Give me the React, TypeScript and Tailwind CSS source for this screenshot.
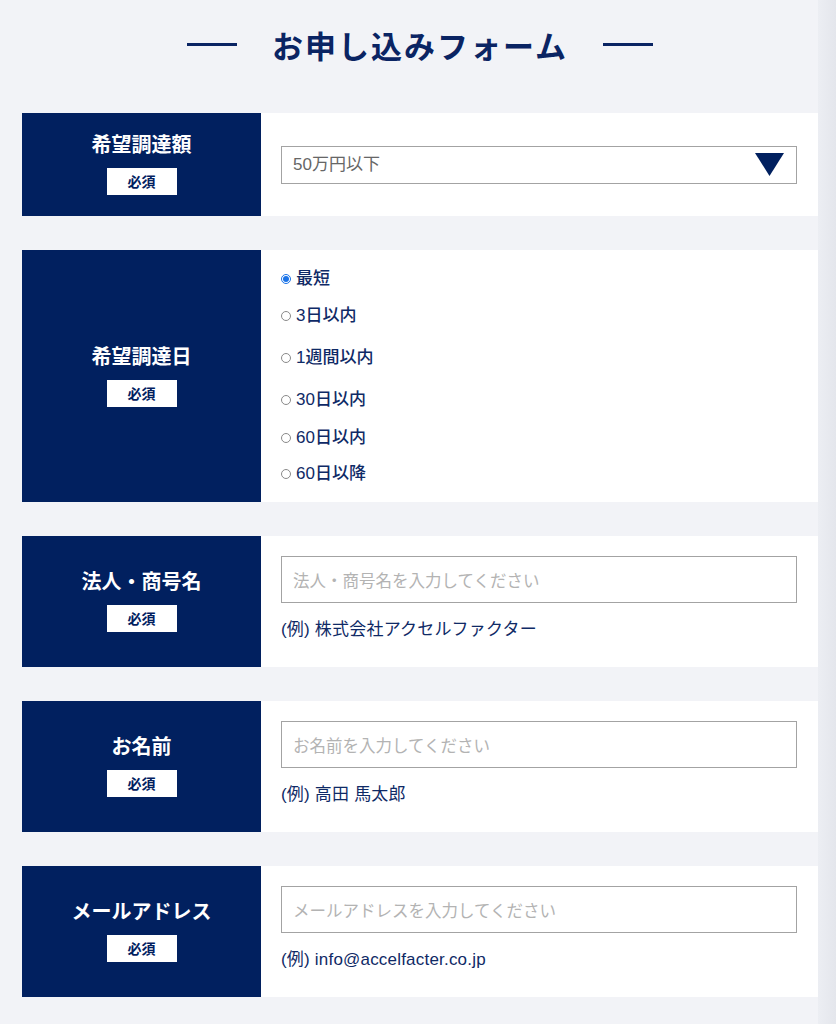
import React, { useState } from 'react';

const font = { fontFamily: '"Noto Sans CJK JP", "Noto Sans", sans-serif' };
const mixed = { fontFamily: '"Liberation Sans", "Noto Sans CJK JP", sans-serif' };

const periods = [
  { label: '最短', cls: 'h-[37px]' },
  { label: '3日以内', cls: 'h-[42px]' },
  { label: '1週間以内', cls: 'h-[42px]' },
  { label: '30日以内', cls: 'h-[38px]' },
  { label: '60日以内', cls: 'h-[36px]' },
  { label: '60日以降', cls: 'h-[28px]' },
];

function Label({ title }: { title: string }) {
  return (
    <div className="w-[239px] shrink-0 bg-[#01205f] flex flex-col items-center justify-center">
      <span className="text-white text-[20px] font-bold leading-[24px] -mt-[2px]">{title}</span>
      <span className="mt-[12px] w-[70px] h-[27px] bg-white text-[#01205f] text-[14px] font-bold flex items-center justify-center">
        必須
      </span>
    </div>
  );
}

function TextRow({ title, placeholder, example }: { title: string; placeholder: string; example: string }) {
  return (
    <div className="flex h-[131px]">
      <Label title={title} />
      <div className="flex-1 bg-white pl-[20px] pr-[21px] pt-[20px]">
        <input
          type="text"
          placeholder={placeholder}
          className="w-full h-[47px] border border-[#a3a3a3] px-[11px] text-[16.5px] text-[#333] placeholder:text-[#b3b3b3] outline-none"
          style={font}
        />
        <p className="mt-[15px] text-[17px] leading-[24px] tracking-[0.2px] text-[#0f2a66]" style={mixed}>{example}</p>
      </div>
    </div>
  );
}

export default function App() {
  const [period, setPeriod] = useState('最短');

  return (
    <div className="min-h-screen bg-[#f2f3f7] flex" style={font}>
      <main className="flex-1 pl-[22px] pb-[27px]">
        {/* Heading */}
        <div className="h-[88px] flex items-center justify-center">
          <span className="w-[50px] h-[3px] bg-[#0a2463]" />
          <h1 className="mx-[35px] text-[31px] font-bold tracking-[2px] text-[#0a2463] leading-none">
            お申し込みフォーム
          </h1>
          <span className="w-[50px] h-[3px] bg-[#0a2463]" />
        </div>

        <div className="mt-[25px] flex flex-col gap-[34px]">
          {/* Amount */}
          <div className="flex h-[103px]">
            <Label title="希望調達額" />
            <div className="flex-1 bg-white pl-[20px] pr-[21px] flex items-center">
              <div className="w-full h-[38px] border border-[#a3a3a3] flex items-center justify-between pl-[11px] pr-[12px]">
                <span className="text-[17px] text-[#666]" style={mixed}>50万円以下</span>
                <svg width="29" height="23" viewBox="0 0 29 23">
                  <polygon points="0,0 29,0 14.5,23" fill="#01205f" />
                </svg>
              </div>
            </div>
          </div>

          {/* Period */}
          <div className="flex h-[252px]">
            <Label title="希望調達日" />
            <div className="flex-1 bg-white pl-[20px] pt-[15px]">
              {periods.map((p) => (
                <label key={p.label} className={`flex items-start cursor-pointer ${p.cls}`}>
                  <span
                    className={`mt-[9px] w-[10px] h-[10px] rounded-full shrink-0 flex items-center justify-center ${
                      period === p.label ? 'border border-[#1a73e8]' : 'border border-[#8a8a8a]'
                    }`}
                    onClick={() => setPeriod(p.label)}
                  >
                    {period === p.label && <span className="w-[6px] h-[6px] rounded-full bg-[#1a73e8]" />}
                  </span>
                  <span className="ml-[5px] text-[17px] leading-[28px] text-[#0f2a66] font-medium" style={mixed}>
                    {p.label}
                  </span>
                </label>
              ))}
            </div>
          </div>

          <TextRow title="法人・商号名" placeholder="法人・商号名を入力してください" example="(例) 株式会社アクセルファクター" />
          <TextRow title="お名前" placeholder="お名前を入力してください" example="(例) 高田 馬太郎" />
          <TextRow title="メールアドレス" placeholder="メールアドレスを入力してください" example="(例) info@accelfacter.co.jp" />
        </div>
      </main>
      <div className="w-[18px] shrink-0 bg-gradient-to-r from-[#eceef3] to-[#e4e6ec]" />
    </div>
  );
}
